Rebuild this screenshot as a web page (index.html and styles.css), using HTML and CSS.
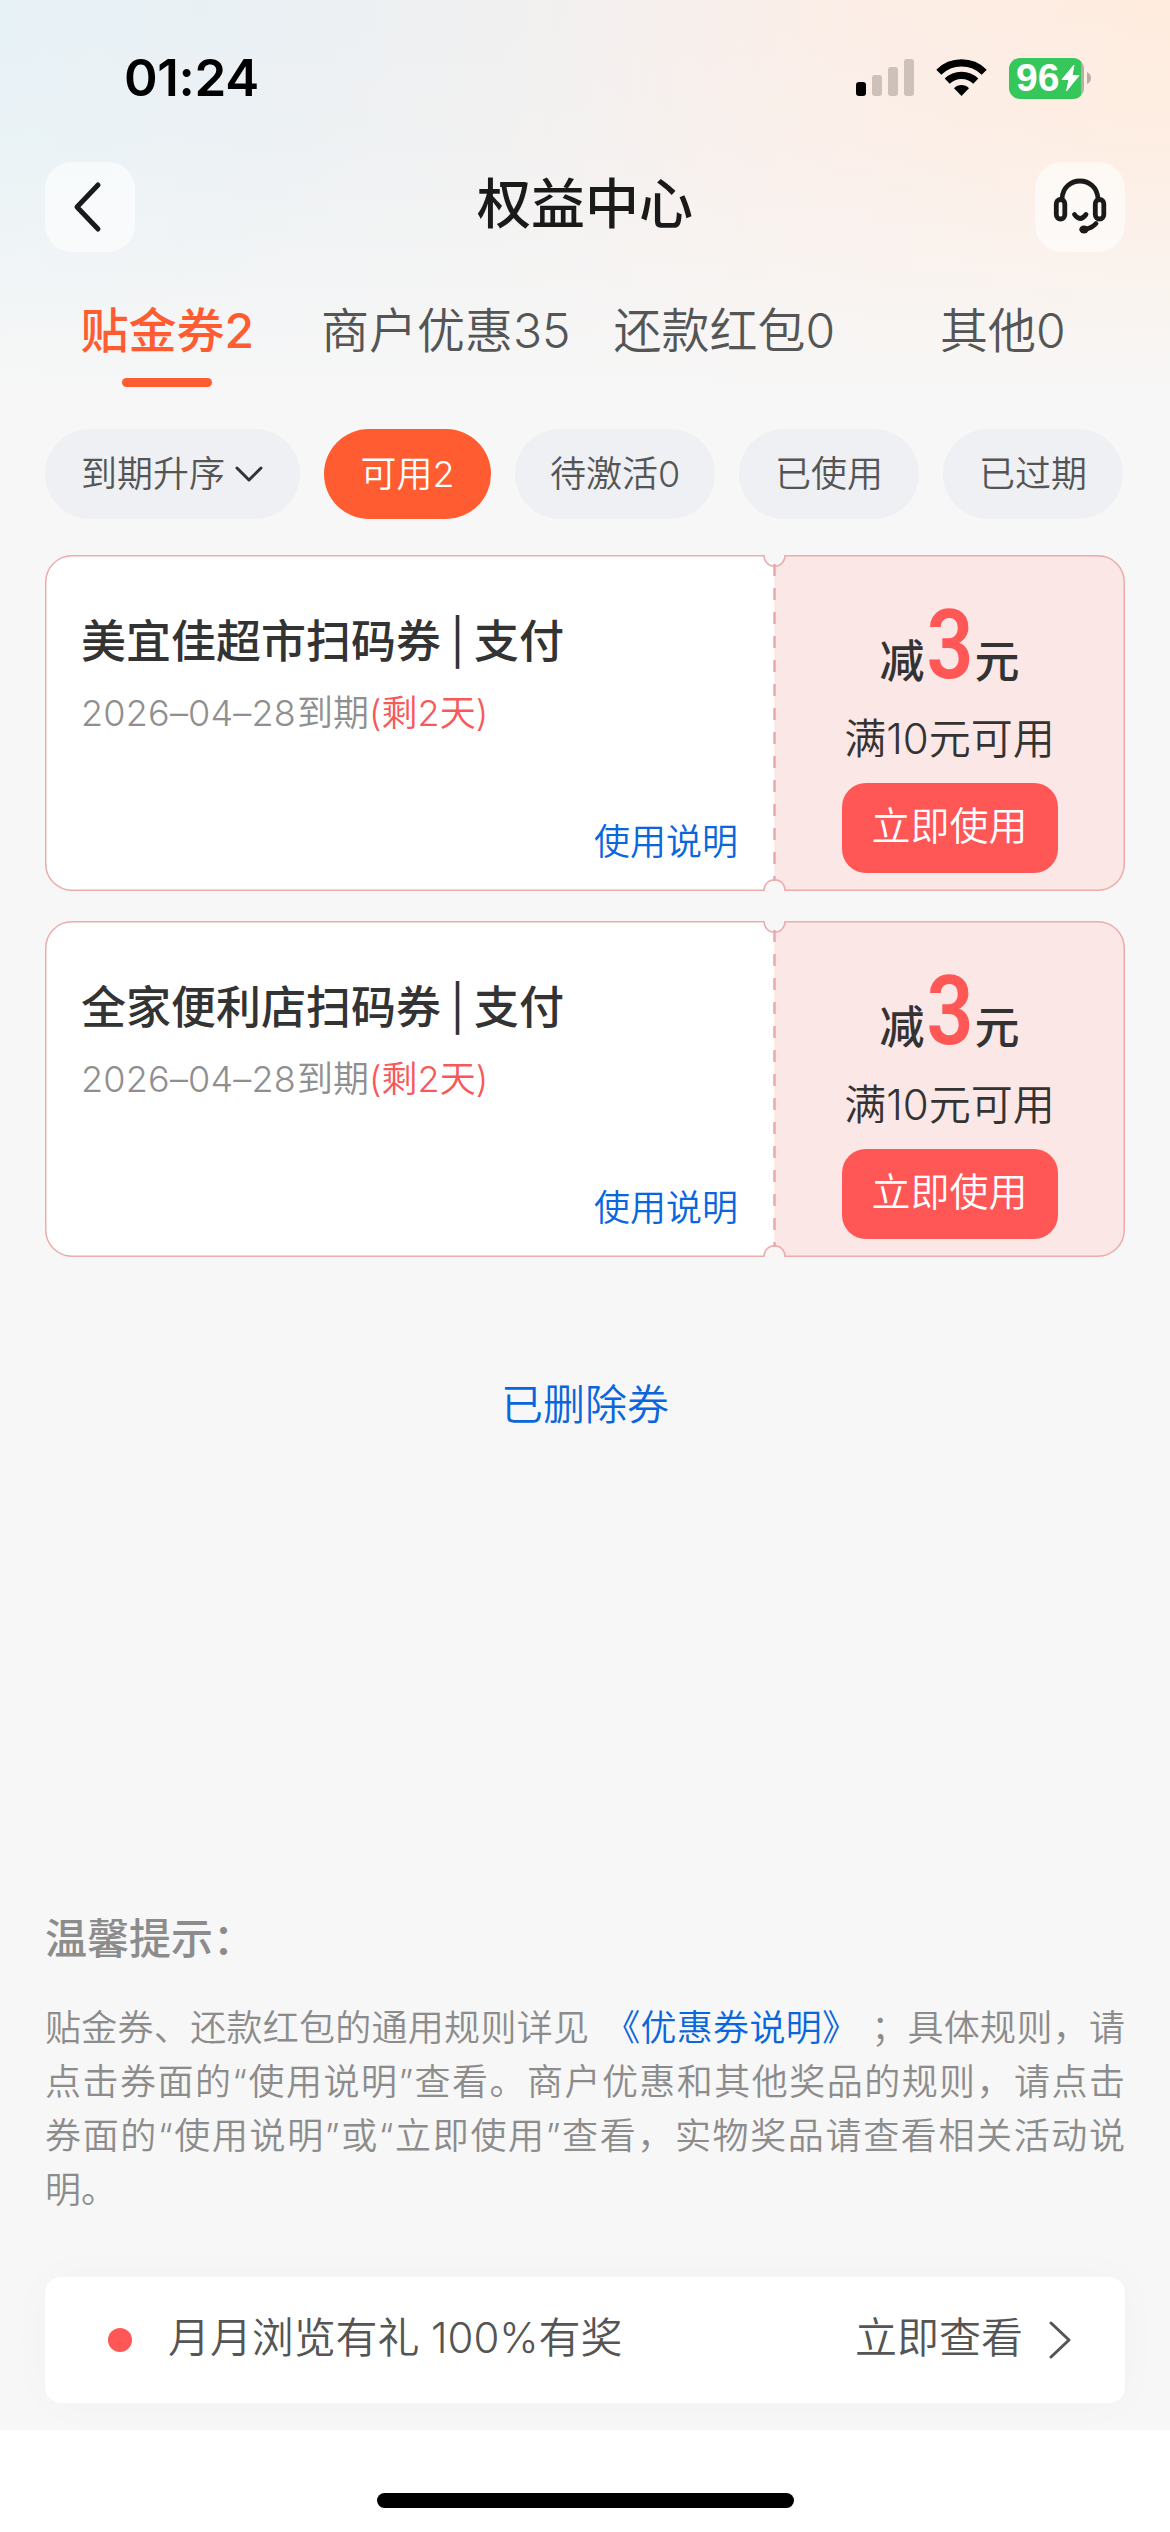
FILE: index.html
```html
<!DOCTYPE html>
<html lang="zh-CN">
<head>
<meta charset="utf-8">
<title>权益中心</title>
<link rel="stylesheet" href="styles.css">
</head>
<body>
<div class="screen">
  <div class="status">
    <span class="time">01:24</span>
    <div class="status-icons">
      <svg class="signal" width="58" height="38" viewBox="0 0 58 38"><rect y="23" width="10" height="14" rx="3"/><g fill="#cdc1ba"><rect x="16" y="16" width="10" height="21" rx="3"/><rect x="32" y="8" width="10" height="29" rx="3"/><rect x="48" width="10" height="37" rx="3"/></g></svg>
      <svg class="wifi" width="51" height="38" viewBox="0 0 51 38"><g fill="none" stroke="#000" stroke-width="7.2"><path d="M2.8 13.2A32.4 32.4 0 0 1 48.2 13.2"/><path d="M11.2 22.2A20.5 20.5 0 0 1 39.8 22.2"/></g><path d="M18 29.2A10.5 10.5 0 0 1 33 29.2L25.5 37Z"/></svg>
      <div class="battery"><span>96</span><svg width="19" height="28" viewBox="0 0 19 28"><path d="M13 1L1 15.500H8L5.500 27L18 11.500H11Z" fill="#fff" stroke="#fff" stroke-linejoin="round"/></svg></div>
      <svg class="tip" width="4" height="12" viewBox="0 0 4 12"><path d="M0 0Q4 2 4 6T0 12Z" fill="#b9aea7"/></svg>
    </div>
  </div>
  <header class="nav">
    <button class="square"><svg width="90" height="90" viewBox="0 0 90 90"><path d="M53 23L32 45L53 67" fill="none" stroke="#1a1a1a" stroke-width="5" stroke-linecap="round" stroke-linejoin="round"/></svg></button>
    <h1>权益中心</h1>
    <button class="square"><svg width="90" height="90" viewBox="0 0 90 90"><g fill="none" stroke="#1a1a1a" stroke-width="4.800" stroke-linecap="round"><path d="M27 37C28 13 62 13 63 37"/><rect x="21.300" y="37.500" width="8.500" height="19.500" rx="4.250"/><rect x="60.300" y="37.500" width="8.500" height="19.500" rx="4.250"/><path d="M39.500 52.500Q45 60.500 51 52.500"/><path d="M61 61.500Q57 66 51 67"/></g><ellipse cx="49" cy="67.500" rx="4.700" ry="4" fill="#1a1a1a"/></svg></button>
  </header>
  <nav class="tabs">
    <a class="tab active">贴金券2</a><a class="tab">商户优惠35</a><a class="tab">还款红包0</a><a class="tab">其他0</a>
  </nav>
  <div class="filters">
    <span class="pill sort">到期升序<svg width="28" height="16" viewBox="0 0 28 16"><path d="M2 2L14 14L26 2" fill="none" stroke="#333" stroke-width="3" stroke-linecap="round" stroke-linejoin="round"/></svg></span>
    <span class="pill on">可用2</span>
    <span class="pill wait">待激活0</span>
    <span class="pill">已使用</span>
    <span class="pill">已过期</span>
  </div>
  <main class="coupons">
    <article class="coupon">
      <svg class="outline" width="1080" height="336" viewBox="0 0 1080 336"><path class="left" d="M729.500 10.500A10.500 10.500 0 0 1 719 .75H27A26.250 26.250 0 0 0 .75 27V309A26.250 26.250 0 0 0 27 335.250H719A10.500 10.500 0 0 1 729.500 325.500Z"/><path class="right" d="M729.500 10.500A10.500 10.500 0 0 0 740 .75H1053A26.250 26.250 0 0 1 1079.250 27V309A26.250 26.250 0 0 1 1053 335.250H740A10.500 10.500 0 0 0 729.500 325.500Z"/><path class="edge" d="M719 .75H27A26.250 26.250 0 0 0 .75 27V309A26.250 26.250 0 0 0 27 335.250H719A10.500 10.500 0 0 1 740 335.250H1053A26.250 26.250 0 0 0 1079.250 309V27A26.250 26.250 0 0 0 1053 .75H740A10.500 10.500 0 0 1 719 .75Z"/><path class="dash" d="M729.500 9V326"/></svg>
      <section class="info">
        <h2>美宜佳超市扫码券<i>|</i>支付</h2>
        <p class="date"><span class="num">2026–04–28</span>到期<em>(剩2天)</em></p>
        <a class="link">使用说明</a>
      </section>
      <section class="offer">
        <p class="amount">减<b>3</b>元</p>
        <p class="cond">满10元可用</p>
        <button class="use">立即使用</button>
      </section>
    </article>
    <article class="coupon">
      <svg class="outline" width="1080" height="336" viewBox="0 0 1080 336"><path class="left" d="M729.500 10.500A10.500 10.500 0 0 1 719 .75H27A26.250 26.250 0 0 0 .75 27V309A26.250 26.250 0 0 0 27 335.250H719A10.500 10.500 0 0 1 729.500 325.500Z"/><path class="right" d="M729.500 10.500A10.500 10.500 0 0 0 740 .75H1053A26.250 26.250 0 0 1 1079.250 27V309A26.250 26.250 0 0 1 1053 335.250H740A10.500 10.500 0 0 0 729.500 325.500Z"/><path class="edge" d="M719 .75H27A26.250 26.250 0 0 0 .75 27V309A26.250 26.250 0 0 0 27 335.250H719A10.500 10.500 0 0 1 740 335.250H1053A26.250 26.250 0 0 0 1079.250 309V27A26.250 26.250 0 0 0 1053 .75H740A10.500 10.500 0 0 1 719 .75Z"/><path class="dash" d="M729.500 9V326"/></svg>
      <section class="info">
        <h2>全家便利店扫码券<i>|</i>支付</h2>
        <p class="date"><span class="num">2026–04–28</span>到期<em>(剩2天)</em></p>
        <a class="link">使用说明</a>
      </section>
      <section class="offer">
        <p class="amount">减<b>3</b>元</p>
        <p class="cond">满10元可用</p>
        <button class="use">立即使用</button>
      </section>
    </article>
  </main>
  <a class="deleted">已删除券</a>
  <section class="tips">
    <h3>温馨提示：</h3>
    <p><span class="line">贴金券、还款红包的通用规则详见<a>《优惠券说明》</a>；具体规则，请</span><span class="line">点击券面的“使用说明”查看。商户优惠和其他奖品的规则，请点击</span><span class="line">券面的“使用说明”或“立即使用”查看，实物奖品请查看相关活动说</span><span class="line last">明。</span></p>
  </section>
  <div class="banner">
    <i class="dot"></i><span class="promo">月月浏览有礼 100%有奖</span><span class="see">立即查看</span>
    <svg width="22" height="38" viewBox="0 0 22 38"><path d="M2 2L20 19L2 36" fill="none" stroke="#555" stroke-width="3" stroke-linecap="round" stroke-linejoin="round"/></svg>
  </div>
  <footer class="home"><i></i></footer>
</div>
</body>
</html>
```
FILE: styles.css
```css
* { box-sizing: border-box; margin: 0; padding: 0; }
body { width: 1170px; font-family: Inter, "Noto Sans CJK SC", sans-serif; font-weight: 350; color: #333; background: #f7f7f7; }
button { border: 0; font: inherit; }
i, em { font-style: normal; }
svg { display: block; flex: none; }
.screen {
  height: 2532px; display: flex; flex-direction: column; overflow: hidden;
  background:
    linear-gradient(180deg, rgba(247,247,247,0) 0, rgba(247,247,247,.15) 130px, rgba(247,247,247,.55) 260px, #f7f7f7 400px),
    linear-gradient(95deg, #e7f2f6 0, #eaf0f4 18%, #f3f0ef 42%, #fbeee8 58%, #ffecdf 82%, #ffecdf 100%);
}
.status { height: 162px; flex: none; display: flex; justify-content: space-between; padding: 48px 79px 0 124px; }
.time { font-size: 51px; font-weight: 600; line-height: 60px; color: #000; letter-spacing: -.3px; }
.status-icons { display: flex; height: 60px; align-items: center; }
.wifi { margin: 0 22px; }
.battery { width: 75px; height: 41px; border-radius: 11px; background: linear-gradient(90deg, #35c759 96%, #b9aea7 96%); display: flex; align-items: center; padding-left: 7px; color: #fff; font-family: "Liberation Sans", sans-serif; font-size: 39px; font-weight: 700; line-height: 42px; }
.battery span { width: 45px; }
.tip { margin-left: 3px; }
.nav { height: 90px; flex: none; display: flex; justify-content: space-between; padding: 0 45px; }
.square { width: 90px; height: 90px; border-radius: 27px; background: rgba(255,255,255,.6); }
h1 { font-size: 54px; line-height: 86px; font-weight: 500; color: #1a1a1a; }
.tabs { height: 177px; flex: none; display: flex; padding: 49px 28px 0; }
.tab { flex: 1; text-align: center; font-size: 48px; line-height: 60px; color: #555; white-space: nowrap; }
.active { color: #ff5c31; font-weight: 450; }
.active::after { content: ""; display: block; width: 90px; height: 9px; margin: 17px auto 0; border-radius: 4.500px; background: #ff5c31; }
.filters { height: 90px; flex: none; display: flex; gap: 24px; padding: 0 45px; }
.pill { width: 180px; height: 90px; border-radius: 45px; background: #eef0f4; color: #555; font-size: 36px; line-height: 90px; text-align: center; flex: none; }
.sort { width: 255px; display: flex; align-items: center; gap: 10px; padding-left: 36px; }
.on { width: 167px; background: #ff5c31; color: #fff; }
.wait { width: 200px; }
.coupons { display: grid; gap: 30px; padding: 36px 45px 0; flex: none; }
.coupon { height: 336px; display: flex; position: relative; }
.outline { position: absolute; inset: 0; }
.left { fill: #fff; }
.right { fill: #fbe7e6; }
.edge, .dash { fill: none; stroke: #edabab; stroke-width: 1.500; }
.dash { stroke: #e8a9ac; stroke-width: 2.500; stroke-dasharray: 12; }
.info { width: 729px; position: relative; padding: 57px 36px 0 36px; display: flex; flex-direction: column; }
h2 { font-size: 45px; line-height: 60px; font-weight: 500; color: #333; white-space: nowrap; }
h2 i { display: inline-block; width: 33px; text-align: center; font-weight: 400; }
.date { font-size: 36px; line-height: 54px; color: #8f8f8f; margin-top: 14px; }
.num { display: inline-block; width: 216px; letter-spacing: .2px; }
.date em { color: #f85858; }
.link { font-size: 36px; line-height: 54px; color: #0a66dc; align-self: flex-end; margin-top: 75px; }
.offer { width: 351px; position: relative; display: flex; flex-direction: column; align-items: center; padding-top: 54px; }
.amount { height: 84px; display: flex; align-items: flex-end; font-size: 45px; line-height: 62px; font-weight: 500; }
.amount b { width: 50px; display: flex; justify-content: center; font-family: Roboto, sans-serif; font-size: 97px; line-height: 96px; font-weight: 600; color: #ff5656; transform: scaleX(.85); }
.cond { font-size: 42px; line-height: 60px; margin-top: 16px; }
.use { width: 216px; height: 90px; margin-top: 14px; border-radius: 24px; background: #ff5656; color: #fff; font-size: 39px; line-height: 54px; padding-bottom: 4px; }
.deleted { height: 60px; flex: none; margin-top: 118px; text-align: center; font-size: 42px; line-height: 60px; color: #0a66dc; }
.tips { flex: none; padding: 0 45px; margin-top: 474px; color: #8c8c8c; height: 368px; }
h3 { font-size: 42px; line-height: 60px; font-weight: 500; }
.tips p { margin-top: 32px; font-size: 36px; line-height: 54px; }
.line { display: block; white-space: nowrap; text-align: justify; text-align-last: justify; }
.last { text-align-last: left; }
.line a { color: #0a66dc; margin: 0 31px 0 15px; }
.banner { height: 126px; flex: none; margin: 0 45px 27px; border-radius: 16px; background: #fff; box-shadow: 0 0 48px rgba(0,0,0,.025); display: flex; align-items: center; padding: 0 54px 0 63px; font-size: 42px; line-height: 60px; color: #555; }
.dot { width: 24px; height: 24px; border-radius: 50%; background: #ff5656; }
.promo { margin-left: 36px; flex: 1; padding-bottom: 4px; letter-spacing: -.1px; }
.see { margin-right: 26px; padding-bottom: 4px; }
.home { position: relative; flex: 1; background: #fff; display: flex; justify-content: center; padding-top: 63px; }
.home i { width: 417px; height: 15px; border-radius: 8px; background: #000; }
```
